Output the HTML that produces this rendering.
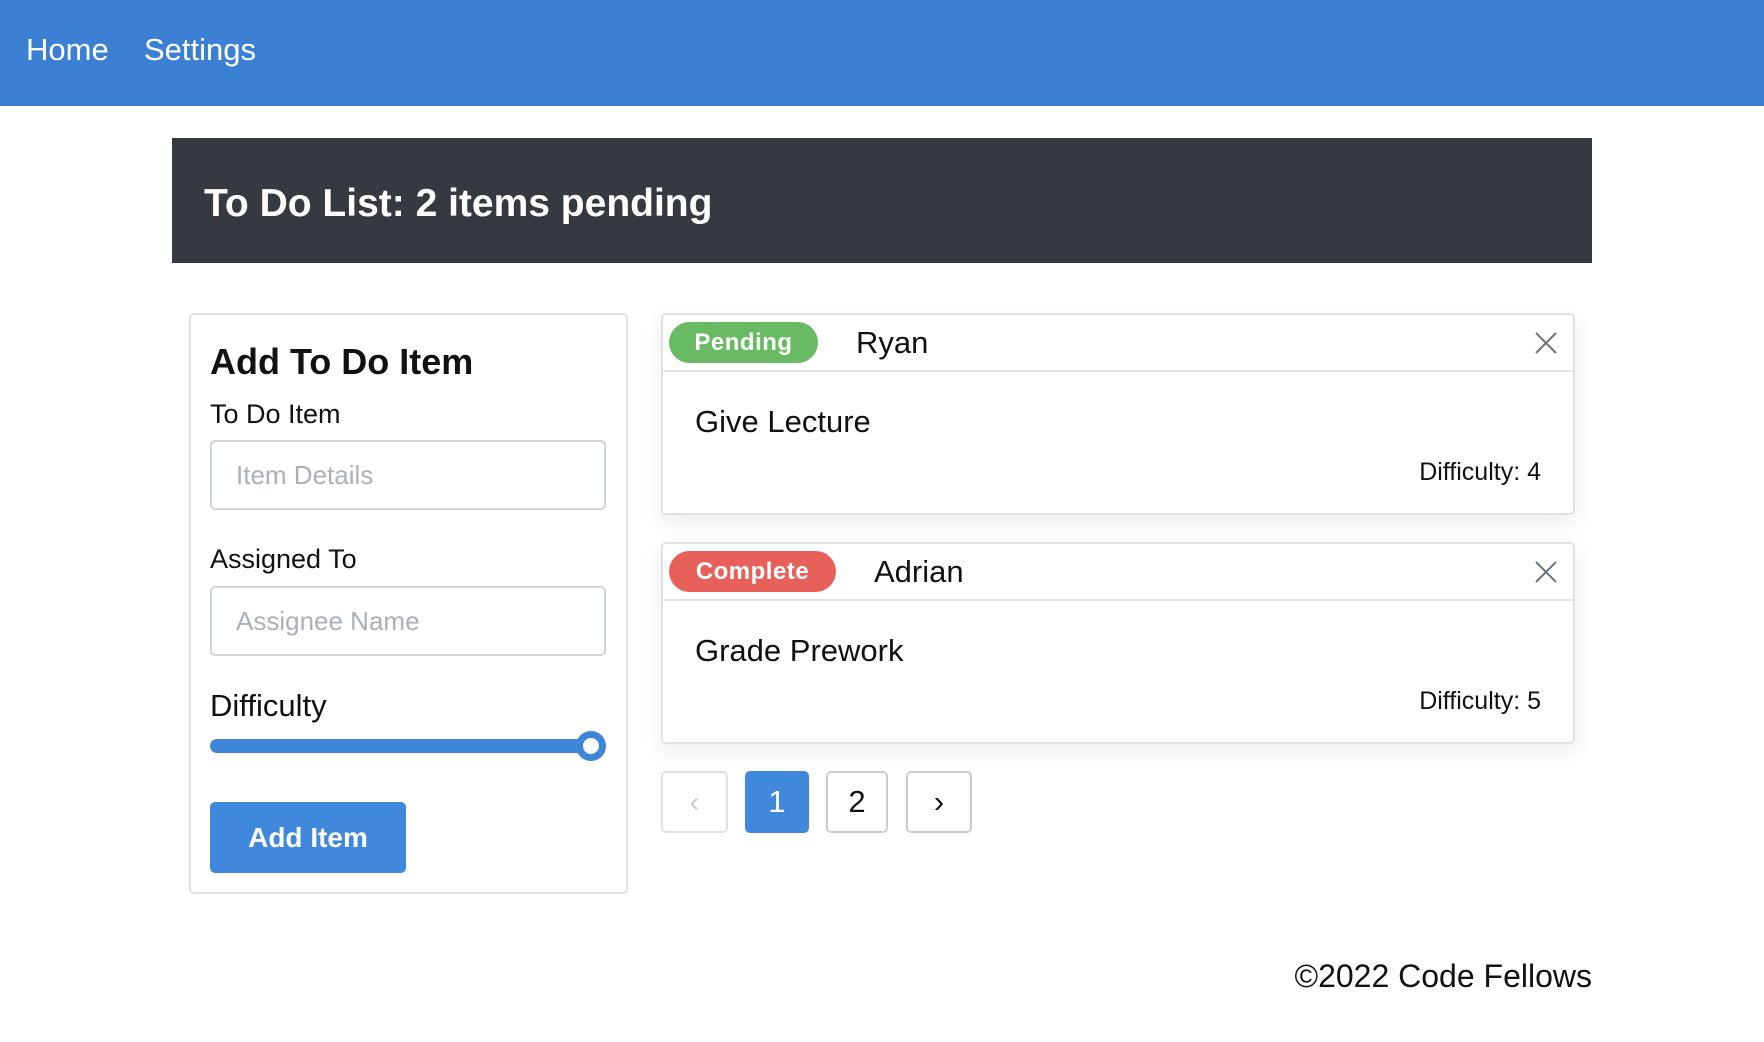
<!DOCTYPE html>
<html><head><meta charset="utf-8"><style>
*{box-sizing:border-box;margin:0;padding:0}
body{width:1764px;height:1042px;background:#fff;font-family:"Liberation Sans",sans-serif;color:#111;position:relative;overflow:hidden}
.abs{position:absolute}
.nav{left:0;top:0;width:1764px;height:106px;background:#3b80d2}
.nav span{position:absolute;top:32px;color:#fff;font-size:31px}
.hdr{left:172px;top:138px;width:1420px;height:125px;background:#343a40;color:#fff;font-weight:bold;font-size:39px;padding-left:32px;line-height:131px}
.lcard{left:189px;top:313px;width:439px;height:581px;border:2px solid #dee2e6;border-radius:5px}
.t{position:absolute;white-space:nowrap;line-height:1}
.inp{position:absolute;left:210px;width:396px;height:70px;border:2px solid #ced4da;border-radius:5px;color:#a9b0b8;font-size:26px;padding-left:24px;line-height:66px}
.card{left:661px;width:914px;border:2px solid #dee2e6;border-radius:5px;box-shadow:0 8px 20px rgba(0,0,0,.08);background:#fff}
.ch{height:57px;border-bottom:2px solid #dee2e6;position:relative}
.badge{position:absolute;left:6px;top:7px;height:41px;border-radius:21px;color:#fff;font-weight:bold;font-size:24px;line-height:41px;text-align:center;letter-spacing:.5px}
.pg{position:absolute;top:771px;height:62px;border:2px solid #dee2e6;border-radius:5px;font-size:31px;text-align:center;line-height:58px}
.x{position:absolute;right:16px;top:17px}
</style></head><body>
<div class="abs nav"><span style="left:26px">Home</span><span style="left:144px">Settings</span></div>
<div class="abs hdr">To Do List: 2 items pending</div>

<div class="abs lcard"></div>
<div class="t" style="left:210px;top:344px;font-size:36px;font-weight:bold">Add To Do Item</div>
<div class="t" style="left:210px;top:401px;font-size:27px">To Do Item</div>
<div class="inp" style="top:440px">Item Details</div>
<div class="t" style="left:210px;top:546px;font-size:27px">Assigned To</div>
<div class="inp" style="top:586px">Assignee Name</div>
<div class="t" style="left:210px;top:690px;font-size:31px">Difficulty</div>
<div class="abs" style="left:210px;top:739px;width:390px;height:14px;border-radius:7px;background:#3f86d9"></div>
<div class="abs" style="left:576px;top:731px;width:30px;height:30px;border-radius:50%;background:#fff;border:7px solid #3f86d9"></div>
<div class="abs" style="left:210px;top:802px;width:196px;height:71px;border-radius:5px;background:#3f88dc;color:#fff;font-size:28px;font-weight:bold;text-align:center;line-height:71px">Add Item</div>

<div class="abs card" style="top:313px;height:202px">
 <div class="ch"><div class="badge" style="width:149px;background:#68bb63">Pending</div>
 <div class="t" style="left:193px;top:12px;font-size:31px">Ryan</div>
 <svg class="x" width="22" height="22" viewBox="0 0 22 22"><path d="M1 1L21 21M21 1L1 21" stroke="#6c757d" stroke-width="2"/></svg></div>
 <div class="t" style="left:32px;top:91px;font-size:31px">Give Lecture</div>
 <div class="t" style="right:32px;top:145px;font-size:25px">Difficulty: 4</div>
</div>
<div class="abs card" style="top:542px;height:202px">
 <div class="ch"><div class="badge" style="width:167px;background:#e8605a">Complete</div>
 <div class="t" style="left:211px;top:12px;font-size:31px">Adrian</div>
 <svg class="x" width="22" height="22" viewBox="0 0 22 22"><path d="M1 1L21 21M21 1L1 21" stroke="#6c757d" stroke-width="2"/></svg></div>
 <div class="t" style="left:32px;top:91px;font-size:31px">Grade Prework</div>
 <div class="t" style="right:32px;top:145px;font-size:25px">Difficulty: 5</div>
</div>

<div class="pg" style="left:661px;width:67px;color:#ccc">‹</div>
<div class="pg" style="left:745px;width:64px;background:#3f88dc;border-color:#3f88dc;color:#fff">1</div>
<div class="pg" style="left:826px;width:62px;border-color:#ccc">2</div>
<div class="pg" style="left:906px;width:66px;border-color:#ccc">›</div>

<div class="t" style="right:172px;top:960px;font-size:32px">©2022 Code Fellows</div>
</body></html>
